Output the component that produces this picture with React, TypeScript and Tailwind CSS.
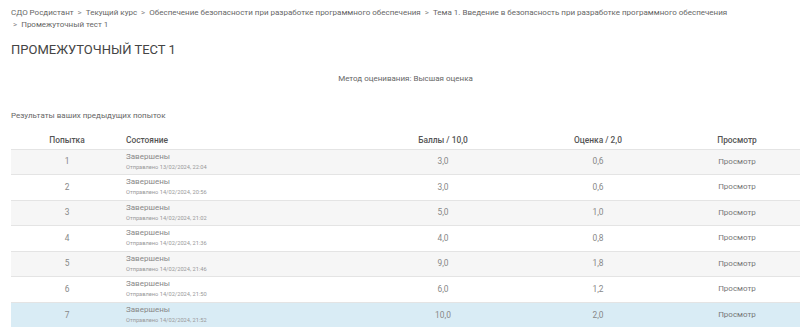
import React from "react";

const attempts = [
  { n: 1, date: "13/02/2024, 22:04", score: "3,0", grade: "0,6" },
  { n: 2, date: "14/02/2024, 20:56", score: "3,0", grade: "0,6" },
  { n: 3, date: "14/02/2024, 21:02", score: "5,0", grade: "1,0" },
  { n: 4, date: "14/02/2024, 21:36", score: "4,0", grade: "0,8" },
  { n: 5, date: "14/02/2024, 21:46", score: "9,0", grade: "1,8" },
  { n: 6, date: "14/02/2024, 21:50", score: "6,0", grade: "1,2" },
  { n: 7, date: "14/02/2024, 21:52", score: "10,0", grade: "2,0" },
];

const crumbs = [
  "СДО Росдистант",
  "Текущий курс",
  "Обеспечение безопасности при разработке программного обеспечения",
  "Тема 1. Введение в безопасность при разработке программного обеспечения",
  "Промежуточный тест 1",
];

function App() {
  return (
    <div
      className="w-[800px] h-[327px] overflow-hidden bg-white text-[#666] pl-[11px]"
      style={{ fontFamily: "Roboto, 'Liberation Sans', sans-serif" }}
    >
      <div className="pt-[7px] text-[8px] leading-[12px] text-[#666] w-[770px]">
        {crumbs.map((c, i) => (
          <span key={i}>
            {i > 0 && (
              <>
                {" "}
                <span className="ml-[2px] mr-[2px] text-[#888]">&gt;</span>
                {"\u00a0"}
              </>
            )}
            {c}
          </span>
        ))}
      </div>

      <h2 className="mt-[11px] text-[13px] leading-[16px] uppercase text-[#444]">
        Промежуточный тест 1
      </h2>

      <p className="mt-[16px] text-center text-[8px] leading-[10px] text-[#666]">
        Метод оценивания: Высшая оценка
      </p>

      <p className="mt-[27px] text-[8px] leading-[10px] text-[#666]">
        Результаты ваших предыдущих попыток
      </p>

      <table className="mt-[12px] w-[789px] table-fixed border-collapse">
        <thead>
          <tr className="h-[16px] text-[8.4px] text-[#555]">
            <th className="w-[112px] font-medium text-center">Попытка</th>
            <th className="w-[241px] font-medium text-left pl-[3px]">Состояние</th>
            <th className="w-[158px] font-medium text-center">Баллы / 10,0</th>
            <th className="w-[152px] font-medium text-center">Оценка / 2,0</th>
            <th className="w-[126px] font-medium text-center">Просмотр</th>
          </tr>
        </thead>
        <tbody>
          {attempts.map((a, i) => (
            <tr
              key={a.n}
              className={
                "h-[25.5px] border-t border-[#e4e4e4] text-[8.4px] text-[#888] " +
                (a.n === 7 ? "bg-[#d9ecf5]" : i % 2 === 0 ? "bg-[#f6f6f6]" : "bg-white")
              }
            >
              <td className="text-center">{a.n}</td>
              <td className="pl-[3px] align-top pt-[2px]">
                <div className="text-[8px] leading-[10px] text-[#888]">Завершены</div>
                <div className="text-[5.7px] leading-[10px] text-[#999]">
                  Отправлено {a.date}
                </div>
              </td>
              <td className="text-center">{a.score}</td>
              <td className="text-center">{a.grade}</td>
              <td className="text-center text-[8px] text-[#777]">Просмотр</td>
            </tr>
          ))}
        </tbody>
      </table>
    </div>
  );
}

export default App;
